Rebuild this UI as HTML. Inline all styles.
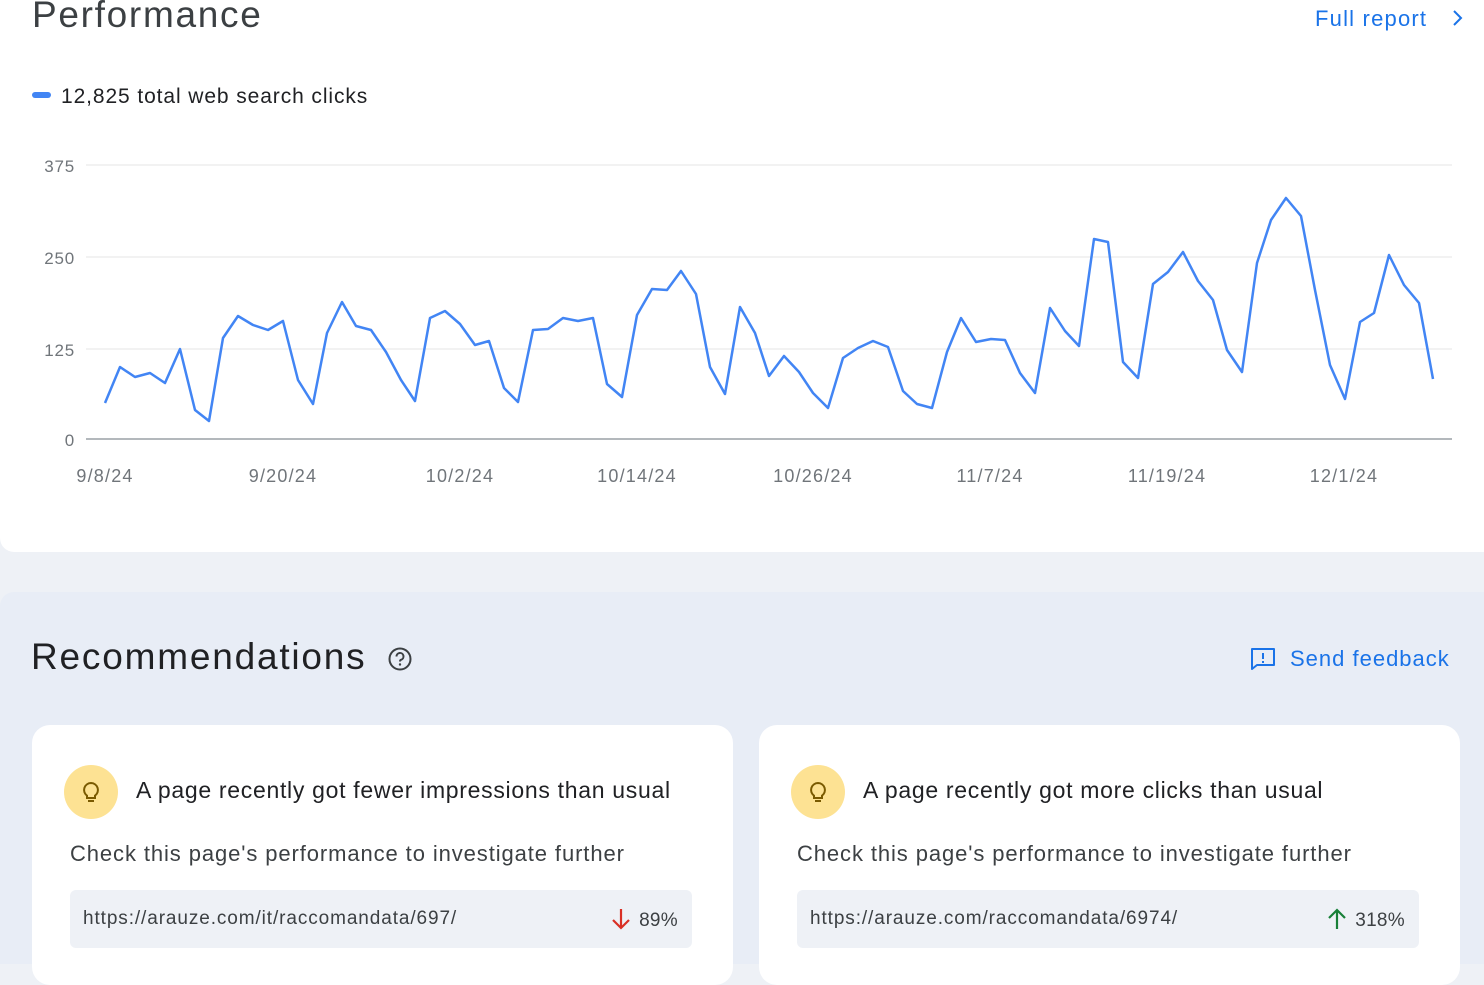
<!DOCTYPE html>
<html><head><meta charset="utf-8"><style>
*{margin:0;padding:0;box-sizing:border-box}
body{width:1484px;height:964px;overflow:hidden;background:#eef1f6;font-family:"Liberation Sans",Arial,sans-serif;position:relative}
.top{position:absolute;left:0;top:0;width:1484px;height:552px;background:#fff;border-bottom-left-radius:14px}
.h1{position:absolute;left:32px;top:-6px;font-size:37px;color:#3c4043;letter-spacing:1.7px}
.full{position:absolute;left:1315px;top:6px;font-size:22px;color:#1a73e8;letter-spacing:1.2px}
.leg{position:absolute;left:32px;top:85px;font-size:21px;color:#202124;letter-spacing:0.9px}
.leg i{display:inline-block;width:19px;height:6px;border-radius:3px;background:#4285f4;margin-right:10px;vertical-align:middle;position:relative;top:-2px}
.rec{position:absolute;left:0;top:592px;width:1484px;height:372px;background:#e8edf6;border-top-left-radius:14px}
.h2{position:absolute;left:31px;top:44px;font-size:37px;color:#202124;letter-spacing:1.8px}
.fb{position:absolute;left:1290px;top:54px;font-size:22px;color:#1a73e8;letter-spacing:1px}
.card{position:absolute;top:133px;width:701px;height:260px;background:#fff;border-radius:18px}
.bulb{position:absolute;left:32px;top:40px;width:54px;height:54px;border-radius:50%;background:#fde293}
.ct{position:absolute;left:104px;top:52px;font-size:23px;color:#202124;letter-spacing:0.7px}
.cs{position:absolute;left:38px;top:116px;font-size:22px;color:#3c4043;letter-spacing:0.9px}
.url{position:absolute;left:38px;top:165px;width:622px;height:58px;background:#eef1f6;border-radius:6px;font-size:19px;color:#3c4043;padding:18px 13px;letter-spacing:0.9px}
.pct{position:absolute;right:14px;top:18px;letter-spacing:0.3px}
</style></head><body>
<div class="top">
<div class="h1">Performance</div>
<div class="full">Full report <svg width="20" height="20" viewBox="0 0 20 20" style="margin-left:12px;vertical-align:-2px"><path d="M7 3l7 7-7 7" fill="none" stroke="#1a73e8" stroke-width="2"/></svg></div>
<div class="leg"><i></i>12,825 total web search clicks</div>
<svg width="1484" height="520" style="position:absolute;left:0;top:0">
<g stroke="#e6e6e6" stroke-width="1"><line x1="86" y1="165" x2="1452" y2="165"/><line x1="86" y1="257" x2="1452" y2="257"/><line x1="86" y1="349" x2="1452" y2="349"/></g>
<line x1="86" y1="439" x2="1452" y2="439" stroke="#9aa0a6" stroke-width="1.5"/>
<g font-family="Liberation Sans,Arial,sans-serif" font-size="17" fill="#70757a" text-anchor="end" letter-spacing="0.8"><text x="75" y="172">375</text><text x="75" y="264">250</text><text x="75" y="356">125</text><text x="75" y="446">0</text></g>
<g font-family="Liberation Sans,Arial,sans-serif" font-size="18" fill="#70757a" text-anchor="middle" letter-spacing="1.2"><text x="105" y="482">9/8/24</text><text x="283" y="482">9/20/24</text><text x="460" y="482">10/2/24</text><text x="637" y="482">10/14/24</text><text x="813" y="482">10/26/24</text><text x="990" y="482">11/7/24</text><text x="1167" y="482">11/19/24</text><text x="1344" y="482">12/1/24</text></g>
<polyline fill="none" stroke="#4285f4" stroke-width="2.5" stroke-linejoin="round" points="105,403 120,367 135,377 150,373 165,383 180,349 195,410 209,421 223,338 238,316 253,325 268,330 283,321 298,380 313,404 327,333 342,302 356,326 371,330 386,352 401,380 415,401 430,318 445,311 460,324 475,345 489,341 504,388 518,402 533,330 548,329 563,318 578,321 593,318 607,384 622,397 637,315 652,289 667,290 681,271 696,294 710,367 725,394 740,307 755,333 769,376 784,356 799,372 813,393 828,408 843,358 858,348 873,341 888,347 903,391 917,404 932,408 947,352 961,318 976,342 991,339 1005,340 1020,373 1035,393 1050,308 1065,331 1079,346 1094,239 1108,242 1123,362 1138,378 1153,284 1168,272 1183,252 1198,281 1213,300 1227,350 1242,372 1257,263 1271,220 1286,198 1301,216 1315,290 1330,365 1345,399 1360,322 1374,313 1389,255 1404,285 1419,303 1433,379"/>
</svg>
</div>
<div class="rec">
<div class="h2">Recommendations</div>
<svg width="26" height="26" viewBox="0 0 26 26" style="position:absolute;left:387px;top:54px"><circle cx="13" cy="13" r="10.5" fill="none" stroke="#3c4043" stroke-width="2"/><path d="M9.5 10.5a3.5 3.5 0 1 1 4.5 3.3c-.7.3-1 .8-1 1.7" fill="none" stroke="#3c4043" stroke-width="2"/><circle cx="13" cy="18.5" r="1.2" fill="#3c4043"/></svg>
<svg width="26" height="24" viewBox="0 0 26 24" style="position:absolute;left:1250px;top:55px"><path d="M2 2h22v16H7l-5 4z" fill="none" stroke="#1a73e8" stroke-width="2" stroke-linejoin="round"/><path d="M13 6v6M13 14v2" stroke="#1a73e8" stroke-width="2"/></svg>
<div class="fb">Send feedback</div>
<div class="card" style="left:32px">
<div class="bulb"><svg width="54" height="54" viewBox="0 0 54 54"><path d="M27 18a7 7 0 0 0-4 12.7V33h8v-2.3A7 7 0 0 0 27 18z" fill="none" stroke="#7a5a00" stroke-width="2"/><path d="M24 36h6" stroke="#7a5a00" stroke-width="2"/></svg></div>
<div class="ct">A page recently got fewer impressions than usual</div>
<div class="cs">Check this page's performance to investigate further</div>
<div class="url">https://arauze.com/it/raccomandata/697/<span class="pct"><svg width="20" height="22" viewBox="0 0 20 22" style="vertical-align:-4px;margin-right:8px"><path d="M10 1v19M2 12l8 8 8-8" fill="none" stroke="#d93025" stroke-width="2.2"/></svg>89%</span></div>
</div>
<div class="card" style="left:759px">
<div class="bulb"><svg width="54" height="54" viewBox="0 0 54 54"><path d="M27 18a7 7 0 0 0-4 12.7V33h8v-2.3A7 7 0 0 0 27 18z" fill="none" stroke="#7a5a00" stroke-width="2"/><path d="M24 36h6" stroke="#7a5a00" stroke-width="2"/></svg></div>
<div class="ct">A page recently got more clicks than usual</div>
<div class="cs">Check this page's performance to investigate further</div>
<div class="url">https://arauze.com/raccomandata/6974/<span class="pct"><svg width="20" height="22" viewBox="0 0 20 22" style="vertical-align:-4px;margin-right:8px"><path d="M10 21V2M2 10l8-8 8 8" fill="none" stroke="#188038" stroke-width="2.2"/></svg>318%</span></div>
</div>
</div>
</body></html>
